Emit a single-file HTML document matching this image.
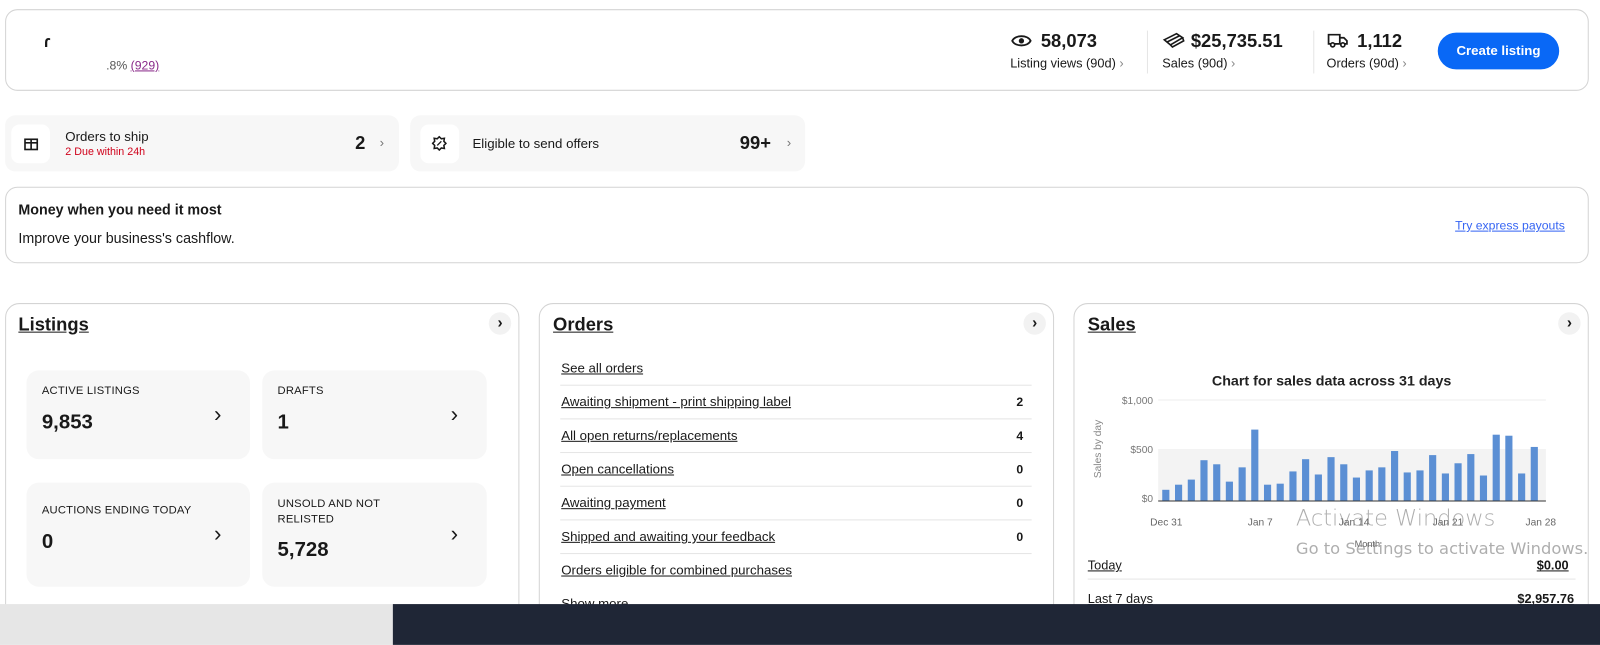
<!DOCTYPE html>
<html><head><meta charset="utf-8"><style>
*{box-sizing:border-box;margin:0;padding:0}
body{width:1600px;height:610px;overflow:hidden;background:#fff;font-family:"Liberation Sans",sans-serif;color:#191919}
#w{position:absolute;left:0;top:0;width:1568px;height:598px;transform:scale(1.020408);transform-origin:0 0}
.a{position:absolute;white-space:nowrap}
.card{position:absolute;border:1px solid #d4d4d4;border-radius:12px;background:#fff}
.tile{position:absolute;background:#f7f7f7;border-radius:10px}
.b{font-weight:bold}
.u{text-decoration:underline}
.chev{position:absolute;width:22px;height:22px;border-radius:50%;background:#f2f2f2;text-align:center;line-height:21px;font-size:15px;font-weight:bold}
.lt{position:absolute;background:#f7f7f7;border-radius:12px}
.lab{position:absolute;left:15px;font-size:11px;color:#191919;letter-spacing:.2px}
.val{position:absolute;left:15px;font-size:20px;font-weight:bold}
.lc{position:absolute;right:28px;font-size:22px;color:#191919}
.row{position:absolute;left:550px;font-size:13px;text-decoration:underline;white-space:nowrap}
.ln{position:absolute;left:549px;width:462px;height:1px;background:#e5e5e5}
.cnt{position:absolute;left:996px;font-size:12px;font-weight:bold}
</style></head><body><div id="w">

<div class="card" style="left:5px;top:9px;width:1552px;height:80px;"></div>
<div class="a b" style="left:43px;top:33px;font-size:16px">ɾ</div>
<div class="a" style="left:104px;top:57px;font-size:12px;color:#555">.8% <span style="color:#8a2a8a;text-decoration:underline">(929)</span></div>

<svg class="a" style="left:990px;top:31px" width="22" height="18" viewBox="0 0 22 18"><path d="M2 9C5 3 17 3 20 9C17 15 5 15 2 9Z" fill="none" stroke="#191919" stroke-width="1.8"/><circle cx="11" cy="9" r="2.6" fill="#191919"/></svg>
<div class="a b" style="left:1020px;top:30px;font-size:18px">58,073</div>
<div class="a" style="left:990px;top:55px;font-size:12.5px">Listing views (90d) <span style="color:#888">›</span></div>
<div class="a" style="left:1124px;top:30px;width:1px;height:42px;background:#e5e5e5"></div>
<svg class="a" style="left:1139px;top:30px" width="22" height="18" viewBox="0 0 22 18"><path d="M2 9L14 3L20 7L8 14Z M5 11L17 5 M8 14L10 16L21 10L20 7" fill="none" stroke="#191919" stroke-width="1.6"/></svg>
<div class="a b" style="left:1167px;top:30px;font-size:18px">$25,735.51</div>
<div class="a" style="left:1139px;top:55px;font-size:12.5px">Sales (90d) <span style="color:#888">›</span></div>
<div class="a" style="left:1287px;top:30px;width:1px;height:42px;background:#e5e5e5"></div>
<svg class="a" style="left:1300px;top:31px" width="22" height="17" viewBox="0 0 22 17"><path d="M2 3H13V12H2Z M13 6H17L20 9V12H13" fill="none" stroke="#191919" stroke-width="1.7"/><circle cx="6" cy="13" r="2" fill="#fff" stroke="#191919" stroke-width="1.6"/><circle cx="16" cy="13" r="2" fill="#fff" stroke="#191919" stroke-width="1.6"/></svg>
<div class="a b" style="left:1330px;top:30px;font-size:18px">1,112</div>
<div class="a" style="left:1300px;top:55px;font-size:12.5px">Orders (90d) <span style="color:#888">›</span></div>
<div class="a b" style="left:1409px;top:32px;width:119px;height:36px;border-radius:18px;background:#0968f6;color:#fff;font-size:13px;text-align:center;line-height:36px">Create listing</div>

<div class="tile" style="left:5px;top:113px;width:386px;height:55px"></div>
<div class="a" style="left:11px;top:122px;width:38px;height:38px;background:#fff;border-radius:8px"></div>
<svg class="a" style="left:23px;top:133px" width="15" height="15" viewBox="0 0 15 15"><rect x="1.5" y="3.5" width="12" height="10" fill="none" stroke="#191919" stroke-width="1.6"/><path d="M1.5 7H13.5M7.5 3.5V13.5" stroke="#191919" stroke-width="1.6"/></svg>
<div class="a" style="left:64px;top:126px;font-size:13px">Orders to ship</div>
<div class="a" style="left:64px;top:143px;font-size:10.5px;color:#d0021b">2 Due within 24h</div>
<div class="a b" style="left:348px;top:130px;font-size:18px">2</div>
<div class="a" style="left:372px;top:132px;font-size:13px;color:#777">›</div>

<div class="tile" style="left:402px;top:113px;width:387px;height:55px"></div>
<div class="a" style="left:412px;top:122px;width:38px;height:38px;background:#fff;border-radius:8px"></div>
<svg class="a" style="left:423px;top:133px" width="15" height="15" viewBox="0 0 15 15"><path d="M7.5 1L9.5 3L12.5 2.5L12 5.5L14 7.5L12 9.5L12.5 12.5L9.5 12L7.5 14L5.5 12L2.5 12.5L3 9.5L1 7.5L3 5.5L2.5 2.5L5.5 3Z" fill="none" stroke="#191919" stroke-width="1.5"/><path d="M5.5 9.5L9.5 5.5" stroke="#191919" stroke-width="1.3"/></svg>
<div class="a" style="left:463px;top:133px;font-size:13px">Eligible to send offers</div>
<div class="a b" style="left:725px;top:130px;font-size:18px">99+</div>
<div class="a" style="left:771px;top:132px;font-size:13px;color:#777">›</div>

<div class="card" style="left:5px;top:183px;width:1552px;height:75px"></div>
<div class="a b" style="left:18px;top:197px;font-size:14px">Money when you need it most</div>
<div class="a" style="left:18px;top:225px;font-size:14px">Improve your business's cashflow.</div>
<div class="a u" style="left:1426px;top:214px;font-size:12px;color:#3665f3">Try express payouts</div>

<div class="card" style="left:5px;top:297px;width:504px;height:320px;border-radius:14px"></div>
<div class="card" style="left:528px;top:297px;width:505px;height:320px;border-radius:14px"></div>
<div class="card" style="left:1052px;top:297px;width:505px;height:320px;border-radius:14px"></div>

<div class="a b u" style="left:18px;top:308px;font-size:18px">Listings</div>
<div class="chev" style="left:479px;top:306px">›</div>
<div class="lt" style="left:26px;top:363px;width:219px;height:87px"><div class="lab" style="top:14px">ACTIVE LISTINGS</div><div class="val" style="top:40px">9,853</div><div class="lc" style="top:30px">›</div></div>
<div class="lt" style="left:257px;top:363px;width:220px;height:87px"><div class="lab" style="top:14px">DRAFTS</div><div class="val" style="top:40px">1</div><div class="lc" style="top:30px">›</div></div>
<div class="lt" style="left:26px;top:473px;width:219px;height:102px"><div class="lab" style="top:21px">AUCTIONS ENDING TODAY</div><div class="val" style="top:47px">0</div><div class="lc" style="top:37px">›</div></div>
<div class="lt" style="left:257px;top:473px;width:220px;height:102px"><div class="lab" style="top:14px;line-height:15px">UNSOLD AND NOT<br>RELISTED</div><div class="val" style="top:55px">5,728</div><div class="lc" style="top:37px">›</div></div>

<div class="a b u" style="left:542px;top:308px;font-size:18px">Orders</div>
<div class="chev" style="left:1003px;top:306px">›</div>
<div class="row" style="top:353px">See all orders</div>
<div class="ln" style="top:377px"></div>
<div class="row" style="top:386px">Awaiting shipment - print shipping label</div><div class="cnt" style="top:387px">2</div>
<div class="ln" style="top:410px"></div>
<div class="row" style="top:419px">All open returns/replacements</div><div class="cnt" style="top:420px">4</div>
<div class="ln" style="top:443px"></div>
<div class="row" style="top:452px">Open cancellations</div><div class="cnt" style="top:453px">0</div>
<div class="ln" style="top:476px"></div>
<div class="row" style="top:485px">Awaiting payment</div><div class="cnt" style="top:486px">0</div>
<div class="ln" style="top:509px"></div>
<div class="row" style="top:518px">Shipped and awaiting your feedback</div><div class="cnt" style="top:519px">0</div>
<div class="ln" style="top:542px"></div>
<div class="row" style="top:551px">Orders eligible for combined purchases</div>
<div class="row" style="top:584px;text-decoration:none">Show more ⌄</div>

<div class="a b u" style="left:1066px;top:308px;font-size:18px">Sales</div>
<div class="chev" style="left:1527px;top:306px">›</div>
<svg class="a" style="left:1052px;top:355px" width="505" height="190" viewBox="1052 355 505 190" font-family="Liberation Sans, sans-serif">
<text x="1305" y="378" text-anchor="middle" font-size="14" font-weight="bold" fill="#222">Chart for sales data across 31 days</text>
<rect x="1135" y="440" width="380" height="51" fill="#f3f3f3"/>
<line x1="1135" y1="392" x2="1515" y2="392" stroke="#eee"/>
<text x="1130" y="396" text-anchor="end" font-size="10" fill="#777">$1,000</text>
<text x="1130" y="444" text-anchor="end" font-size="10" fill="#777">$500</text>
<text x="1130" y="492" text-anchor="end" font-size="10" fill="#777">$0</text>
<text transform="translate(1079,440) rotate(-90)" text-anchor="middle" font-size="10" fill="#888">Sales by day</text>
<g fill="#5b8fd4">
<rect x="1139" y="480" width="7" height="11"/><rect x="1151.5" y="475" width="7" height="16"/><rect x="1164" y="470" width="7" height="21"/><rect x="1176.4" y="451" width="7" height="40"/><rect x="1188.9" y="455" width="7" height="36"/><rect x="1201.3" y="472" width="7" height="19"/><rect x="1213.8" y="458" width="7" height="33"/><rect x="1226.2" y="421" width="7" height="70"/><rect x="1238.7" y="475" width="7" height="16"/><rect x="1251.1" y="474" width="7" height="17"/><rect x="1263.6" y="462" width="7" height="29"/><rect x="1276" y="450" width="7" height="41"/><rect x="1288.5" y="465" width="7" height="26"/><rect x="1300.9" y="448" width="7" height="43"/><rect x="1313.4" y="455" width="7" height="36"/><rect x="1325.8" y="468" width="7" height="23"/><rect x="1338.3" y="461" width="7" height="30"/><rect x="1350.7" y="458" width="7" height="33"/><rect x="1363.2" y="442" width="7" height="49"/><rect x="1375.6" y="463" width="7" height="28"/><rect x="1388.1" y="461" width="7" height="30"/><rect x="1400.5" y="446" width="7" height="45"/><rect x="1413" y="464" width="7" height="27"/><rect x="1425.4" y="454" width="7" height="37"/><rect x="1437.9" y="445" width="7" height="46"/><rect x="1450.3" y="466" width="7" height="25"/><rect x="1462.8" y="426" width="7" height="65"/><rect x="1475.2" y="427" width="7" height="64"/><rect x="1487.7" y="464" width="7" height="27"/><rect x="1500.1" y="438" width="7" height="53"/>
</g>
<line x1="1135" y1="491" x2="1515" y2="491" stroke="#333"/>
<g font-size="10" fill="#666" text-anchor="middle">
<text x="1143" y="515">Dec 31</text><text x="1235" y="515">Jan 7</text><text x="1327" y="515">Jan 14</text><text x="1419" y="515">Jan 21</text><text x="1510" y="515">Jan 28</text>
<text x="1340" y="536" font-size="9">Month</text></g>
</svg>
<div class="a u" style="left:1066px;top:547px;font-size:12.5px">Today</div>
<div class="a b u" style="left:1506px;top:547px;font-size:12.5px">$0.00</div>
<div class="a" style="left:1066px;top:567px;width:478px;height:1px;background:#e5e5e5"></div>
<div class="a u" style="left:1066px;top:580px;font-size:12.5px">Last 7 days</div>
<div class="a b u" style="left:1487px;top:580px;font-size:12.5px">$2,957.76</div>

<div class="a" style="left:1270px;top:496px;font-size:22px;color:rgba(120,120,120,.6);font-family:'DejaVu Sans',sans-serif;font-weight:300">Activate Windows</div>
<div class="a" style="left:1270px;top:528px;font-size:16px;color:rgba(120,120,120,.6);font-family:'DejaVu Sans',sans-serif">Go to Settings to activate Windows.</div>

<div class="a" style="left:0;top:592px;width:385px;height:40px;background:#e6e6e6"></div>
<div class="a" style="left:385px;top:592px;width:1183px;height:40px;background:#1f2636"></div>
</div></body></html>
